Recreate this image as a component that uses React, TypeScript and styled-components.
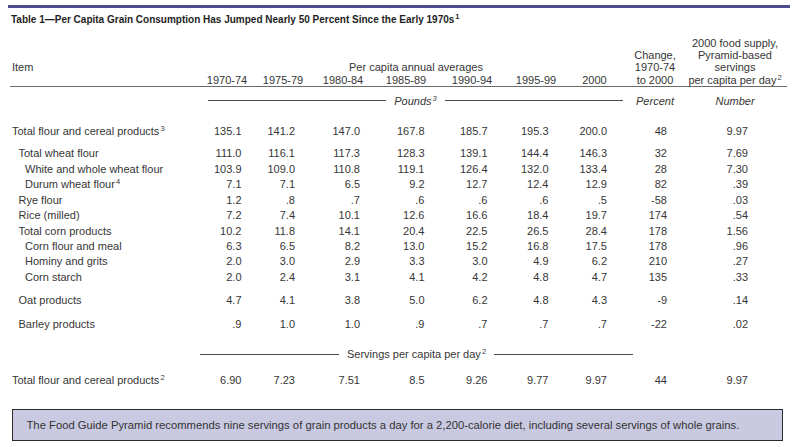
import React from "react";
import styled, { createGlobalStyle } from "styled-components";

const GlobalStyle = createGlobalStyle`
  html, body { margin: 0; padding: 0; background: #ffffff; }
  body { font-family: "Liberation Sans", Arial, Helvetica, sans-serif; color: #363636; }
`;

type Col = { w: number; pad: number };
const COLS: Col[] = [
  { w: 54, pad: 12.5 },
  { w: 58, pad: 17 },
  { w: 62, pad: 14 },
  { w: 64, pad: 13.5 },
  { w: 68, pad: 18.5 },
  { w: 60, pad: 17.5 },
  { w: 57, pad: 16 },
  { w: 64, pad: 20 },
  { w: 96, pad: 35 },
];
const GRID = `190px ${COLS.map((c) => `${c.w}px`).join(" ")}`;

const Page = styled.div`
  width: 800px;
  height: 447px;
  overflow: hidden;
  box-sizing: border-box;
  padding: 5px 0 0 8px;
  font-size: 11px;
`;

const TopRule = styled.div`
  width: 782px;
  border-top: 3px solid #4b4f8e;
`;

const Title = styled.h1`
  margin: 6px 0 0 3px;
  font-size: 10px;
  line-height: 12px;
  font-weight: bold;
  color: #1e1e1e;
`;

const Table = styled.div`
  margin-left: 2px;
  width: 777px;
`;

const Header = styled.div`
  display: grid;
  grid-template-columns: ${GRID};
  grid-template-rows: repeat(4, 12.2px);
  line-height: 12.2px;
  margin-top: 11px;
  border-bottom: 1px solid #6a6a6a;
`;

const HeadCell = styled.div<{ $col: string; $row: string; $align?: string; $shift?: number }>`
  grid-column: ${(p) => p.$col};
  grid-row: ${(p) => p.$row};
  text-align: ${(p) => p.$align || "center"};
  padding-left: ${(p) => p.$shift || 0}px;
  white-space: nowrap;
`;

const UnitRow = styled.div<{ $gap: number }>`
  display: grid;
  grid-template-columns: ${GRID};
  line-height: 14px;
  margin-top: ${(p) => p.$gap}px;
`;

const RuleLabel = styled.div<{ $col: string; $lead: number; $trail: number }>`
  grid-column: ${(p) => p.$col};
  display: flex;
  align-items: center;
  gap: 8px;
  padding-left: ${(p) => p.$lead}px;
  padding-right: ${(p) => p.$trail}px;
  white-space: nowrap;
`;

const Line = styled.span`
  flex: 1;
  height: 1px;
  background: #4a4a4a;
`;

const Unit = styled.span<{ $italic?: boolean }>`
  font-style: ${(p) => (p.$italic ? "italic" : "normal")};
  text-align: center;
`;

const Row = styled.div<{ $gap: number }>`
  display: grid;
  grid-template-columns: ${GRID};
  line-height: 15.43px;
  margin-top: ${(p) => p.$gap}px;
`;

const Label = styled.div<{ $indent: number }>`
  padding-left: ${(p) => 2 + p.$indent * 6.5}px;
  white-space: nowrap;
`;

const Num = styled.div<{ $pad: number }>`
  text-align: right;
  padding-right: ${(p) => p.$pad}px;
  white-space: nowrap;
`;

const Sup = styled.sup`
  font-size: 7.5px;
  line-height: 0;
  vertical-align: 0;
  position: relative;
  top: -4px;
  margin-left: 1px;
`;

const Note = styled.div`
  margin: 21px 0 0 4px;
  width: 771px;
  height: 32px;
  box-sizing: border-box;
  border: 1.5px solid #2b2b2b;
  background: #c9c9e2;
  display: flex;
  align-items: center;
  padding-left: 13.5px;
  color: #333;
  font-size: 11.25px;
  white-space: nowrap;
`;

type DataRow = { label: string; indent: number; sup?: string; values: string[]; gap: number };

const ROWS: DataRow[] = [
  { label: "Total flour and cereal products", indent: 0, sup: "3", gap: 16, values: ["135.1", "141.2", "147.0", "167.8", "185.7", "195.3", "200.0", "48", "9.97"] },
  { label: "Total wheat flour", indent: 1, gap: 7.2, values: ["111.0", "116.1", "117.3", "128.3", "139.1", "144.4", "146.3", "32", "7.69"] },
  { label: "White and whole wheat flour", indent: 2, gap: 0, values: ["103.9", "109.0", "110.8", "119.1", "126.4", "132.0", "133.4", "28", "7.30"] },
  { label: "Durum wheat flour", indent: 2, sup: "4", gap: 0, values: ["7.1", "7.1", "6.5", "9.2", "12.7", "12.4", "12.9", "82", ".39"] },
  { label: "Rye flour", indent: 1, gap: 0, values: ["1.2", ".8", ".7", ".6", ".6", ".6", ".5", "-58", ".03"] },
  { label: "Rice (milled)", indent: 1, gap: 0, values: ["7.2", "7.4", "10.1", "12.6", "16.6", "18.4", "19.7", "174", ".54"] },
  { label: "Total corn products", indent: 1, gap: 0, values: ["10.2", "11.8", "14.1", "20.4", "22.5", "26.5", "28.4", "178", "1.56"] },
  { label: "Corn flour and meal", indent: 2, gap: 0, values: ["6.3", "6.5", "8.2", "13.0", "15.2", "16.8", "17.5", "178", ".96"] },
  { label: "Hominy and grits", indent: 2, gap: 0, values: ["2.0", "3.0", "2.9", "3.3", "3.0", "4.9", "6.2", "210", ".27"] },
  { label: "Corn starch", indent: 2, gap: 0, values: ["2.0", "2.4", "3.1", "4.1", "4.2", "4.8", "4.7", "135", ".33"] },
  { label: "Oat products", indent: 1, gap: 7.9, values: ["4.7", "4.1", "3.8", "5.0", "6.2", "4.8", "4.3", "-9", ".14"] },
  { label: "Barley products", indent: 1, gap: 8.6, values: [".9", "1.0", "1.0", ".9", ".7", ".7", ".7", "-22", ".02"] },
];

const SERVINGS_ROW: DataRow = {
  label: "Total flour and cereal products",
  indent: 0,
  sup: "2",
  gap: 11.3,
  values: ["6.90", "7.23", "7.51", "8.5", "9.26", "9.77", "9.97", "44", "9.97"],
};

const YEARS = ["1970-74", "1975-79", "1980-84", "1985-89", "1990-94", "1995-99", "2000"];

function DataLine({ row }: { row: DataRow }) {
  return (
    <Row $gap={row.gap}>
      <Label $indent={row.indent}>
        {row.label}
        {row.sup && <Sup>{row.sup}</Sup>}
      </Label>
      {row.values.map((v, i) => (
        <Num key={i} $pad={COLS[i].pad}>
          {v}
        </Num>
      ))}
    </Row>
  );
}

export default function App() {
  return (
    <>
      <GlobalStyle />
      <Page>
        <TopRule />
        <Title>
          Table 1—Per Capita Grain Consumption Has Jumped Nearly 50 Percent Since the Early 1970s<Sup>1</Sup>
        </Title>
        <Table>
          <Header>
            <HeadCell $col="1" $row="3" $align="left" $shift={2}>
              Item
            </HeadCell>
            <HeadCell $col="2 / 9" $row="3" $shift={9}>
              Per capita annual averages
            </HeadCell>
            {YEARS.map((y, i) => (
              <HeadCell key={y} $col={`${i + 2}`} $row="4">
                {y}
              </HeadCell>
            ))}
            <HeadCell $col="9" $row="2 / 5">
              Change,
              <br />
              1970-74
              <br />
              to 2000
            </HeadCell>
            <HeadCell $col="10" $row="1 / 5">
              2000 food supply,
              <br />
              Pyramid-based
              <br />
              servings
              <br />
              per capita per day<Sup>2</Sup>
            </HeadCell>
          </Header>
          <UnitRow $gap={7}>
            <RuleLabel $col="2 / 9" $lead={8} $trail={0}>
              <Line />
              <Unit $italic>
                Pounds<Sup>3</Sup>
              </Unit>
              <Line />
            </RuleLabel>
            <Unit $italic>Percent</Unit>
            <Unit $italic>Number</Unit>
          </UnitRow>
          {ROWS.map((r) => (
            <DataLine key={r.label} row={r} />
          ))}
          <UnitRow $gap={14.6}>
            <RuleLabel $col="2 / 10" $lead={0} $trail={54}>
              <Line />
              <Unit>
                Servings per capita per day<Sup>2</Sup>
              </Unit>
              <Line />
            </RuleLabel>
          </UnitRow>
          <DataLine row={SERVINGS_ROW} />
        </Table>
        <Note>
          The Food Guide Pyramid recommends nine servings of grain products a day for a 2,200-calorie diet, including
          several servings of whole grains.
        </Note>
      </Page>
    </>
  );
}
